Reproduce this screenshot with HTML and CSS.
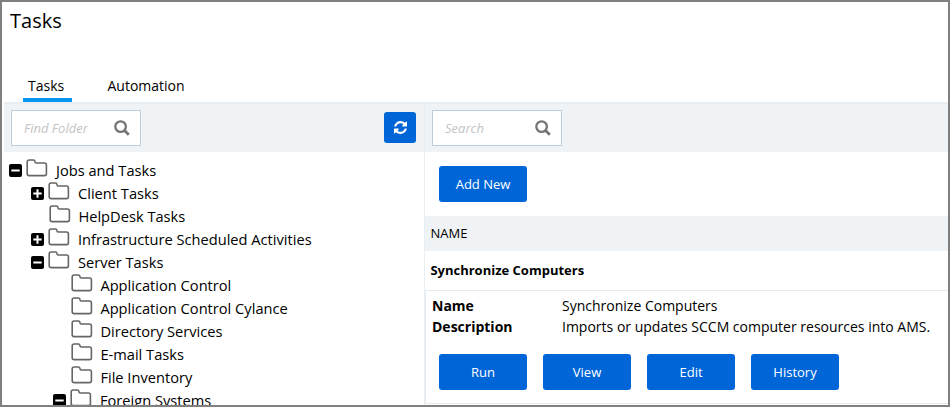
FILE: index.html
```html
<!DOCTYPE html>
<html lang="en">
<head>
<meta charset="utf-8">
<title>Tasks</title>
<link rel="stylesheet" href="styles.css">
</head>
<body>
<svg class="defs" aria-hidden="true">
  <symbol id="folder" viewBox="0 0 22 19"><path d="M1.2 4V3Q1.2 1 3.2 1H7.4Q8.8 1 8.9 2.4Q9 4 10.2 4H18.5Q20.4 4 20.4 6V14.7Q20.4 16.6 18.5 16.6H3.2Q1.2 16.6 1.2 14.7Z" fill="none" stroke="#666" stroke-width="1.6"/></symbol>
  <symbol id="minus" viewBox="0 0 13 13"><rect width="13" height="13" rx="2" fill="#000"/><path d="M2.3 6.5h8.4" stroke="#fff" stroke-width="2"/></symbol>
  <symbol id="plus" viewBox="0 0 13 13"><rect width="13" height="13" rx="2" fill="#000"/><path d="M2.3 6.5h8.4M6.5 2.3v8.4" stroke="#fff" stroke-width="2"/></symbol>
  <symbol id="search" viewBox="0 0 16 16"><circle cx="6.6" cy="6.6" r="5.3" fill="none" stroke="#757575" stroke-width="2.3"/><path d="M10.5 10.5l4.3 4.3" stroke="#757575" stroke-width="2.8"/></symbol>
  <symbol id="refresh" viewBox="0 0 1536 1536"><path fill="#fff" d="M1511 928q0 5-1 7-64 268-268 434.500T764 1536q-146 0-282.500-55T238 1324l-129 129q-19 19-45 19t-45-19-19-45V960q0-26 19-45t45-19h448q26 0 45 19t19 45-19 45l-137 137q71 66 161 102t187 36q134 0 250-65t186-179q11-17 53-117 8-23 30-23h192q13 0 22.500 9.500t9.500 22.500zm25-800v448q0 26-19 45t-45 19h-448q-26 0-45-19t-19-45 19-45l138-138Q969 256 768 256q-134 0-250 65T332 500q-11 17-53 117-8 23-30 23H50q-13 0-22.500-9.500T18 608v-7q65-268 270-434.500T768 0q146 0 284 55.500T1297 212l130-129q19-19 45-19t45 19 19 45z"/></symbol>
</svg>
<div class="app">
  <h1 class="title">Tasks</h1>
  <nav class="tabs"><a class="tab active">Tasks</a><a class="tab">Automation</a></nav>
  <div class="panes">
    <section class="folders">
      <div class="toolbar">
        <label class="search"><span>Find Folder</span><svg><use href="#search"/></svg></label>
        <button class="refresh" aria-label="Refresh"><svg><use href="#refresh"/></svg></button>
      </div>
      <ul class="tree">
        <li><svg class="toggle"><use href="#minus"/></svg><svg class="folder"><use href="#folder"/></svg><span>Jobs and Tasks</span></li>
        <li class="l1"><svg class="toggle"><use href="#plus"/></svg><svg class="folder"><use href="#folder"/></svg><span>Client Tasks</span></li>
        <li class="l1 leaf"><svg class="folder"><use href="#folder"/></svg><span>HelpDesk Tasks</span></li>
        <li class="l1"><svg class="toggle"><use href="#plus"/></svg><svg class="folder"><use href="#folder"/></svg><span>Infrastructure Scheduled Activities</span></li>
        <li class="l1"><svg class="toggle"><use href="#minus"/></svg><svg class="folder"><use href="#folder"/></svg><span>Server Tasks</span></li>
        <li class="l2 leaf"><svg class="folder"><use href="#folder"/></svg><span>Application Control</span></li>
        <li class="l2 leaf"><svg class="folder"><use href="#folder"/></svg><span>Application Control Cylance</span></li>
        <li class="l2 leaf"><svg class="folder"><use href="#folder"/></svg><span>Directory Services</span></li>
        <li class="l2 leaf"><svg class="folder"><use href="#folder"/></svg><span>E-mail Tasks</span></li>
        <li class="l2 leaf"><svg class="folder"><use href="#folder"/></svg><span>File Inventory</span></li>
        <li class="l2"><svg class="toggle"><use href="#minus"/></svg><svg class="folder"><use href="#folder"/></svg><span>Foreign Systems</span></li>
      </ul>
    </section>
    <section class="content">
      <div class="toolbar"><label class="search"><span>Search</span><svg><use href="#search"/></svg></label></div>
      <div class="actions"><button class="btn">Add New</button></div>
      <div class="head">NAME</div>
      <div class="row">Synchronize Computers</div>
      <div class="detail">
        <dl><dt>Name</dt><dd>Synchronize Computers</dd><dt>Description</dt><dd>Imports or updates SCCM computer resources into AMS.</dd></dl>
        <div class="buttons"><button class="btn">Run</button><button class="btn">View</button><button class="btn">Edit</button><button class="btn">History</button></div>
      </div>
    </section>
  </div>
</div>
</body>
</html>
```
FILE: styles.css
```css
* { box-sizing: border-box; }
body { margin: 0; background: #fff; color: #000; font: 14px/20px "Open Sans", sans-serif; }
.defs { display: none; }
svg { display: block; flex: none; }
.app { height: 407px; border: 2px solid #808080; overflow: hidden; padding-left: 2px; }
.title { margin: 0; height: 68px; padding: 4px 0 0 6px; font-size: 20px; line-height: 30px; font-weight: 400; }
.tabs { display: flex; height: 32px; padding-left: 19px; gap: 30.5px; }
.tab { padding: 6px 5px 0; height: 32px; }
.tab.active { width: 49px; border-bottom: 4px solid #0794ee; }
.panes { display: grid; grid-template-columns: 420px 1fr; height: 303px; }
.toolbar { display: flex; justify-content: space-between; height: 50px; background: #eff3f6; border-top: 2px solid #e8eff4; padding: 6px 8px 0 7px; }
.search { display: flex; align-items: center; justify-content: space-between; width: 130px; height: 36px; padding: 0 10px 0 12px; border: 1px solid #bccddb; background: #fff; color: #c4c4c4; font-size: 13px; font-style: italic; }
.search svg { width: 16px; height: 16px; }
.refresh { width: 32px; height: 31px; margin: 2px 0 0; padding: 0; display: grid; place-items: center; background: #0066d8; border: 0; border-radius: 3px; }
.refresh svg { width: 13px; height: 13px; }
.tree { margin: 0; padding: 5px 0 0 5px; list-style: none; font-size: 14.65px; }
.tree li { display: flex; height: 23px; }
.tree .l1 { padding-left: 22px; }
.tree .l2 { padding-left: 44px; }
.tree .l1.leaf { padding-left: 40px; }
.tree .l2.leaf { padding-left: 62px; }
.toggle { width: 13px; height: 13px; margin: 7px 4px 0 0; }
.folder { width: 22px; height: 19px; margin: 2px 8px 0 0; }
.tree .leaf .folder { margin-right: 7.4px; }
.tree span { padding-top: 3px; white-space: nowrap; }
.content { border-left: 1px solid #e8eff4; }
.actions { height: 64px; padding: 14px 0 0 14px; }
.btn { display: block; width: 88px; height: 36px; padding: 0; border: 0; border-radius: 3px; background: #0066d8; color: #fff; font: 13px/20px "Open Sans", sans-serif; }
.head { height: 35px; padding: 7px 5.5px; background: #eff3f6; font-size: 13px; }
.row { height: 39px; padding: 9px 5.4px; font-size: 13px; font-weight: 700; }
.detail { height: 114px; border: solid #e8eaed; border-width: 1px 0 1px 1px; padding: 4px 0 0 6px; }
dl { display: grid; grid-template-columns: 130px 1fr; grid-auto-rows: 21px; margin: 0; line-height: 21px; white-space: nowrap; }
dt { font-weight: 700; }
dd { margin: 0; }
.buttons { display: flex; gap: 16px; padding: 17px 0 0 7px; }
```
